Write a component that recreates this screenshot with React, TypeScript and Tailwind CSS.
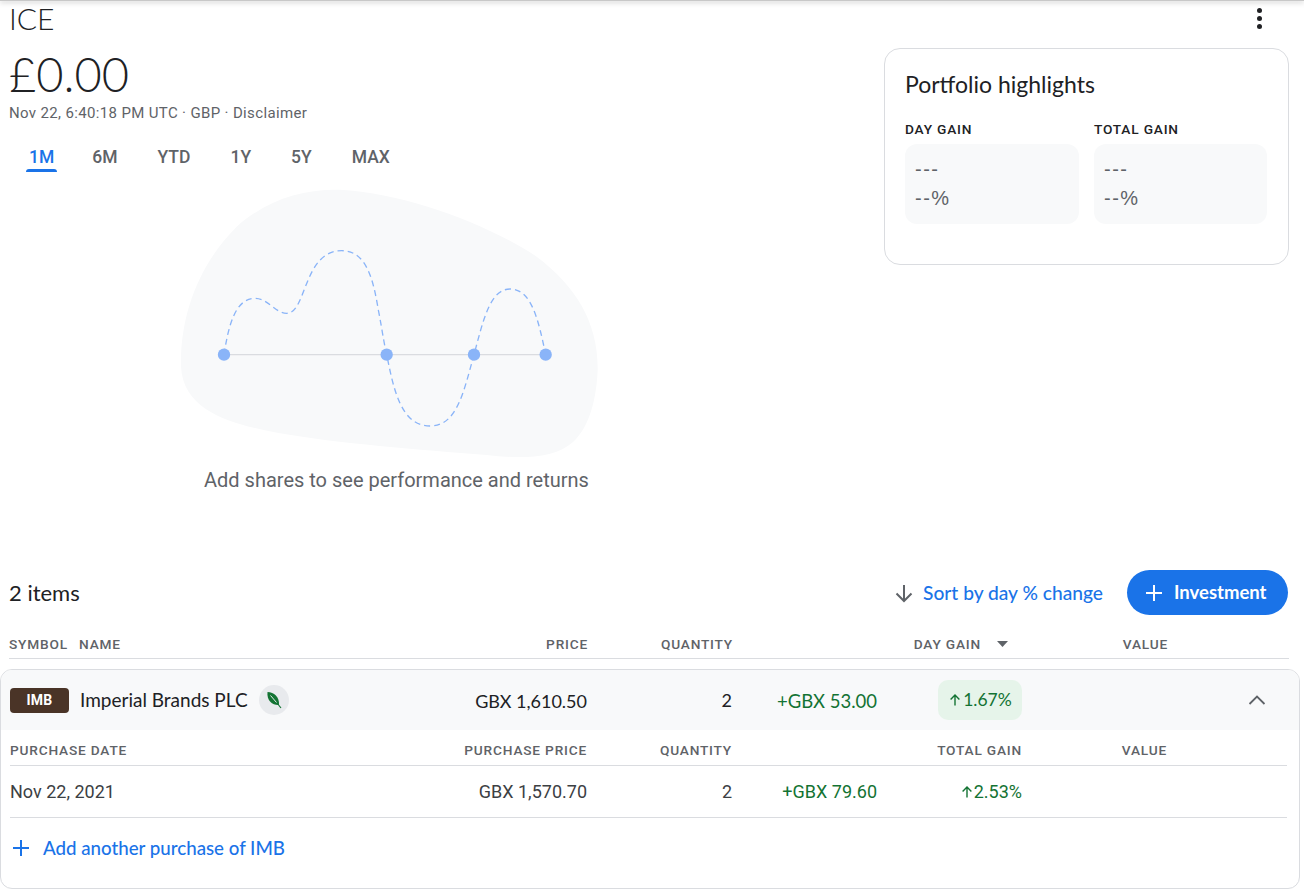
const gs = "font-['Lato','Liberation_Sans',sans-serif]";
const rb = "font-['Roboto','Liberation_Sans',sans-serif]";

function Blob() {
  return (
    <svg width="440" height="320" viewBox="0 0 1320 960" className="block">
      <path fill="#f8f9fa" d="M520 30C700 40 950 130 1100 230C1220 320 1285 430 1283 570C1280 650 1260 740 1210 785C1150 840 1040 835 950 825C750 810 500 790 330 760C200 735 40 700 33 560C30 400 90 250 200 140C290 60 400 25 520 30Z" />
      <path d="M162 524H1127" stroke="#dadce0" strokeWidth="4" fill="none" />
      <path fill="none" stroke="#8ab4f8" strokeWidth="4" strokeDasharray="18 12" d="M162 524C175 440 195 355 255 355C295 355 315 400 350 400C410 400 400 212 515 212C590 212 610 300 625 390C635 440 640 480 650 524C670 620 690 738 780 738C860 738 880 640 912 524C940 420 960 327 1020 327C1085 327 1105 420 1127 524" />
      {[162, 650, 912, 1127].map((x) => (
        <circle key={x} cx={x} cy="524" r="18.5" fill="#8ab4f8" />
      ))}
    </svg>
  );
}

function Plus({ color, size = 18 }: { color: string; size?: number }) {
  return (
    <svg width={size} height={size} viewBox="0 0 18 18" className="block shrink-0">
      <path d="M9 1v16M1 9h16" stroke={color} strokeWidth="2" fill="none" />
    </svg>
  );
}

function UpArrow({ size = 14 }: { size?: number }) {
  return (
    <svg width={size} height={size} viewBox="0 0 14 14" className="block shrink-0">
      <path d="M7 12.5V2.2M2.6 6.4L7 2l4.4 4.4" stroke="#137333" strokeWidth="1.4" fill="none" />
    </svg>
  );
}

function Highlight({ label, w }: { label: string; w: string }) {
  return (
    <div className={w}>
      <div className={`${rb} text-[13.7px] font-medium tracking-[0.8px] text-[#202124] leading-[16px]`}>{label}</div>
      <div className="mt-[7px] h-[80px] rounded-[12px] bg-[#f8f9fa] px-[10px] pt-[10px] font-['Liberation_Sans',sans-serif] text-[20px] tracking-[1.5px] text-[#5f6368]">
        <div className="h-[30px] leading-[30px]">---</div>
        <div className="h-[30px] leading-[28px]">--%</div>
      </div>
    </div>
  );
}

const hd = `${rb} text-[13.7px] font-medium tracking-[0.8px] text-[#5f6368] leading-[16px]`;

export default function App() {
  return (
    <div className="relative h-[896px] w-[1304px] overflow-hidden bg-white">
      <div className="absolute left-0 right-0 top-0 h-[1px] bg-[#c8c8c8] shadow-[0_1px_5px_rgba(0,0,0,0.5)]" />

      <div className="flex h-[570px] pl-[9px]">
        <div className="w-[875px]">
          <div className={`${gs} h-[36px] text-[30px] font-light leading-[36px] text-[#202124]`}>ICE</div>
          <div className={`${gs} mt-[3px] h-[62px] text-[47px] font-light leading-[70px] text-[#202124]`}>£0.00</div>
          <div className={`${rb} mt-[2px] text-[15px] leading-[20px] tracking-[0.35px] text-[#5f6368]`}>
            Nov 22, 6:40:18 PM UTC · GBP · Disclaimer
          </div>
          <div className={`${rb} mt-[24px] flex h-[28px] gap-[40px] pl-[20px] text-[17.5px] font-medium leading-[20px] text-[#5f6368]`}>
            <div className="relative -mr-[2px] text-[#1a73e8]">
              1M
              <div className="absolute -left-[3px] -right-[3px] top-[22px] h-[3px] rounded-t-[3px] bg-[#1a73e8]" />
            </div>
            <div>6M</div>
            <div>YTD</div>
            <div>1Y</div>
            <div>5Y</div>
            <div>MAX</div>
          </div>
          <div className="ml-[161px] mt-[5px]">
            <Blob />
          </div>
        </div>
        <div className="w-[420px]">
          <div className="flex h-[48px] justify-end pr-[41px] pt-[8px]">
            <div className="flex h-[21px] w-[6px] flex-col justify-between">
              <div className="h-[5px] w-[5px] rounded-full bg-[#202124]" />
              <div className="h-[5px] w-[5px] rounded-full bg-[#202124]" />
              <div className="h-[5px] w-[5px] rounded-full bg-[#202124]" />
            </div>
          </div>
          <div className="h-[217px] w-[405px] rounded-[16px] border border-[#dadce0] px-[20px] pt-[20px]">
            <div className={`${gs} text-[23px] font-normal leading-[30px] text-[#202124]`}>Portfolio highlights</div>
            <div className="mt-[22px] flex gap-[15px]">
              <Highlight label="DAY GAIN" w="w-[174px]" />
              <Highlight label="TOTAL GAIN" w="w-[173px]" />
            </div>
          </div>
        </div>
      </div>

      <div className={`${rb} absolute left-[204px] top-[468px] text-[20px] leading-[24px] text-[#5f6368]`}>
        Add shares to see performance and returns
      </div>

      <div className="flex h-[45px] items-center pl-[9px] pr-[16px]">
        <div className={`${gs} text-[22px] leading-[28px] text-[#202124]`}>2 items</div>
        <div className="flex-1" />
        <svg width="20" height="20" viewBox="0 0 20 20" className="mr-[9px] block">
          <path d="M10 2v15.500M2.500 10.500L10 18l7.500-7.500" stroke="#5f6368" strokeWidth="2" fill="none" />
        </svg>
        <div className={`${gs} text-[19.2px] font-medium leading-[24px] text-[#1a73e8]`}>Sort by day % change</div>
        <div className="ml-[24px] flex h-[45px] w-[161px] items-center rounded-full bg-[#1a73e8] pl-[18px]">
          <Plus color="#fff" size={18} />
          <span className={`${gs} ml-[11px] text-[18.5px] font-bold text-white`}>Investment</span>
        </div>
      </div>

      <div className="ml-[9px] mt-[12px] flex h-[32px] w-[1280px] items-center border-b border-[#dadce0] pt-[3px]">
        <div className={`${hd} w-[70px]`}>SYMBOL</div>
        <div className={`${hd} w-[180px]`}>NAME</div>
        <div className={`${hd} w-[329px] text-right`}>PRICE</div>
        <div className={`${hd} w-[145px] text-right`}>QUANTITY</div>
        <div className={`${hd} w-[248px] text-right`}>DAY GAIN</div>
        <svg width="11" height="6" viewBox="0 0 11 6" className="ml-[16px] block"><path d="M0 0h11L5.500 6z" fill="#5f6368" /></svg>
        <div className={`${hd} w-[160px] text-right`}>VALUE</div>
      </div>

      <div className="mt-[10px] h-[220px] w-[1300px] overflow-hidden rounded-[12px] border border-[#dadce0]">
        <div className="flex h-[60px] items-center bg-[#f8f9fa] pl-[9px]">
          <div className={`${rb} flex h-[25px] w-[59px] items-center justify-center rounded-[4px] bg-[#4a3427] text-[14px] font-bold tracking-[0.3px] text-white`}>IMB</div>
          <div className={`${gs} ml-[11px] w-[179px] whitespace-nowrap text-[19px] leading-[24px] text-[#202124]`}>Imperial Brands PLC</div>
          <div className="flex h-[30px] w-[30px] items-center justify-center rounded-full bg-[#e8eaed]">
            <svg width="16" height="18" viewBox="0 0 16 18" className="block">
              <path d="M1.500 1C8 1.500 13.500 5.500 13 14C7 14.500 .5 10 1.500 1z" fill="#137333" />
              <path d="M11 12l4 5" stroke="#137333" strokeWidth="1.200" fill="none" />
              <path d="M4.500 4.500L10.500 11.500" stroke="#e8eaed" strokeWidth="1" fill="none" />
            </svg>
          </div>
          <div className={`${gs} w-[298px] pt-[3px] text-right text-[18px] text-[#202124]`}>GBX 1,610.50</div>
          <div className={`${gs} w-[145px] text-right text-[18px] text-[#202124]`}>2</div>
          <div className={`${gs} w-[145px] whitespace-nowrap pt-[3px] text-right text-[18.5px] text-[#137333]`}>+GBX 53.00</div>
          <div className="ml-[61px] flex h-[40px] w-[84px] items-center justify-center rounded-[10px] bg-[#e6f4ea]">
            <UpArrow size={14} />
            <span className={`${gs} pl-[1px] text-[17.5px] text-[#137333]`}>1.67%</span>
          </div>
          <svg width="18" height="10" viewBox="0 0 18 10" className="ml-[226px] block">
            <path d="M1.500 9L9 1.500 16.500 9" stroke="#5f6368" strokeWidth="1.800" fill="none" />
          </svg>
        </div>

        <div className="ml-[9px] flex h-[36px] w-[1277px] items-center border-b border-[#dadce0] pt-[4px]">
          <div className={`${hd} w-[250px]`}>PURCHASE DATE</div>
          <div className={`${hd} w-[327px] text-right`}>PURCHASE PRICE</div>
          <div className={`${hd} w-[145px] text-right`}>QUANTITY</div>
          <div className={`${hd} w-[290px] text-right`}>TOTAL GAIN</div>
          <div className={`${hd} w-[145px] text-right`}>VALUE</div>
        </div>

        <div className={`${rb} ml-[9px] flex h-[52px] w-[1277px] items-center border-b border-[#dadce0] text-[18px] text-[#3c4043]`}>
          <div className="w-[250px]">Nov 22, 2021</div>
          <div className="w-[327px] text-right">GBX 1,570.70</div>
          <div className="w-[145px] text-right">2</div>
          <div className="w-[145px] text-right text-[#137333]">+GBX 79.60</div>
          <div className="flex w-[145px] items-center justify-end text-[#137333]">
            <UpArrow size={14} />
            <span>2.53%</span>
          </div>
        </div>

        <div className="flex h-[58px] items-center pl-[11px] pt-[2px]">
          <Plus color="#1a73e8" size={18} />
          <span className={`${gs} ml-[13px] text-[18.7px] font-medium text-[#1a73e8]`}>Add another purchase of IMB</span>
        </div>
      </div>
    </div>
  );
}
